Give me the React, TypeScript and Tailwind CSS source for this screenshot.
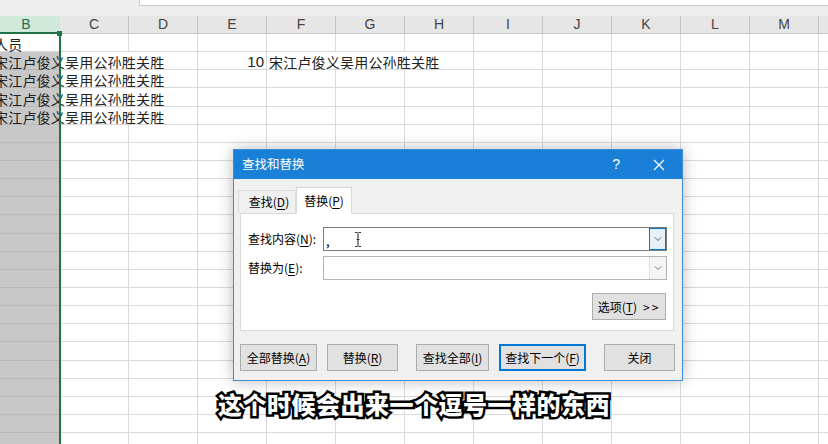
import { ChevronDown } from 'lucide-react';

const COLS = ['B', 'C', 'D', 'E', 'F', 'G', 'H', 'I', 'J', 'K', 'L', 'M', ''];
const WIDTHS = [68, 69, 69, 69, 69, 69, 69, 69, 69, 69, 69, 69, 80];
const NAMES = '宋江卢俊义吴用公孙胜关胜';

type Cell = { text: string; right?: boolean };
type Row = { cells: Record<string, Cell>; open?: string[] };

const ROWS: Row[] = [
  { cells: { B: { text: '人员' } } },
  {
    cells: { B: { text: NAMES }, E: { text: '10', right: true }, F: { text: NAMES } },
    open: ['B', 'C', 'F', 'G'],
  },
  { cells: { B: { text: NAMES } }, open: ['B', 'C'] },
  { cells: { B: { text: NAMES } }, open: ['B', 'C'] },
  { cells: { B: { text: NAMES } }, open: ['B', 'C'] },
  ...Array.from({ length: 18 }, () => ({ cells: {} })),
];

const CJK = 'font-["Noto_Sans_CJK_SC","Noto_Sans",sans-serif]';

function Sheet() {
  return (
    <div className="flex flex-col">
      {/* formula bar strip */}
      <div className="flex h-[16px] bg-[#eeeeee]">
        <div className="w-[139px]" />
        <div className="h-[6px] flex-1 border-b border-l border-[#c8c8c8] bg-white" />
      </div>

      {/* column headers */}
      <div className="ml-[-8px] flex h-[18px] bg-[#e6e6e6] font-['Liberation_Sans',sans-serif] text-[14px]">
        {COLS.map((c, i) => (
          <div
            key={i}
            style={{ width: WIDTHS[i] }}
            className={
              c === 'B'
                ? 'flex shrink-0 items-center justify-center border-b-2 border-[#217346] bg-[#cfeadb] text-[#2a6b49]'
                : 'flex shrink-0 items-center justify-center border-r border-b border-[#c6c6c6] text-[#444]'
            }
          >
            {c}
          </div>
        ))}
      </div>

      {/* cells */}
      {ROWS.map((row, r) => (
        <div key={r} className={`ml-[-8px] flex h-[18.15px] bg-white text-[14px] text-[#222] ${CJK}`}>
          {COLS.map((c, i) => {
            const cell = c ? row.cells[c] : undefined;
            const open = row.open?.includes(c);
            const grey = c === 'B' && r > 0;
            return (
              <div
                key={i}
                style={{ width: WIDTHS[i] }}
                className={`flex shrink-0 items-center whitespace-nowrap border-b ${
                  open ? 'border-r-0' : 'border-r'
                } ${grey ? 'border-[#b9b9b9] bg-[#c8c8c8]' : 'border-[#dadada]'} ${
                  cell?.right ? 'justify-end pr-[2px]' : 'pl-[2px]'
                }`}
              >
                {cell && (
                  <span
                    className={
                      cell.right
                        ? "mt-[3px] font-['Liberation_Sans',sans-serif] text-[15px]"
                        : 'mt-[3px] leading-[18px] tracking-[0.2px]'
                    }
                  >
                    {cell.text}
                  </span>
                )}
              </div>
            );
          })}
        </div>
      ))}
    </div>
  );
}

function Btn({ label, w, primary }: { label: React.ReactNode; w: string; primary?: boolean }) {
  return (
    <div
      className={`flex h-[27px] ${w} items-center justify-center bg-[#e1e1e1] text-[12px] text-black ${
        primary ? 'border-2 border-[#0078d7]' : 'border border-[#adadad]'
      }`}
    >
      {label}
    </div>
  );
}

function u(s: string) {
  return <span className="underline underline-offset-2">{s}</span>;
}

function Dialog() {
  return (
    <div
      className={`absolute left-[233px] top-[149px] flex h-[232px] w-[450px] flex-col border border-[#3d8ddb] bg-[#f0f0f0] shadow-[0_0_14px_rgba(0,0,0,0.28)] ${CJK}`}
    >
      {/* title bar */}
      <div className="flex h-[29px] shrink-0 items-center bg-[#1a7fd6] pl-[8px] text-[12.5px] text-white">
        <span>查找和替换</span>
        <span className="ml-auto mr-[33px] font-['Liberation_Sans',sans-serif] text-[14px]">?</span>
        <svg width="12" height="12" viewBox="0 0 12 12" className="mr-[17px]">
          <path d="M1 1L11 11M11 1L1 11" stroke="white" strokeWidth="1.2" />
        </svg>
      </div>

      {/* tabs */}
      <div className="ml-[4px] mt-[8px] flex h-[26px] items-end text-[12px] text-black">
        <div className="flex h-[23px] w-[58px] items-center justify-center border border-b-0 border-[#dcdcdc] bg-[#f0f0f0] pl-[4px]">
          查找({u('D')})
        </div>
        <div className="relative z-10 mb-[-1px] flex h-[27px] w-[56px] items-center justify-center border border-b-0 border-[#d9d9d9] bg-white">
          替换({u('P')})
        </div>
      </div>

      {/* panel */}
      <div className="ml-[6px] flex h-[118px] w-[434px] flex-col border border-[#d9d9d9] bg-white pt-[13px] text-[12px] text-black">
        <div className="flex h-[24px] items-center">
          <span className="ml-[7px] w-[75px]">查找内容({u('N')}):</span>
          <div className="relative flex h-[24px] w-[344px] items-center border border-[#7a7a7a]">
            <span className="ml-[2px] mt-[4px] text-[13px]">,</span>
            <svg width="8" height="15" viewBox="0 0 8 15" className="absolute left-[30px] top-[4px]">
              <path d="M1 0.5H3.5M4.5 0.5H7M4 1V14M1 14.5H3.5M4.5 14.5H7M2.5 7.5H5.5" stroke="#333" strokeWidth="1.1" fill="none" />
            </svg>
            <div className="ml-auto flex h-[22px] w-[17px] items-center justify-center border border-[#0078d7] bg-[#e5f1fb]">
              <ChevronDown size={12} strokeWidth={1.5} color="#333" />
            </div>
          </div>
        </div>
        <div className="mt-[5px] flex h-[24px] items-center">
          <span className="ml-[7px] w-[75px]">替换为({u('E')}):</span>
          <div className="flex h-[24px] w-[344px] items-center border border-[#b4b4b4]">
            <div className="ml-auto flex h-[22px] w-[17px] items-center justify-center border-l border-[#dcdcdc] bg-[#f5f5f5]">
              <ChevronDown size={12} strokeWidth={1.5} color="#555" />
            </div>
          </div>
        </div>
        <div className="mr-[7px] mt-[13px] flex justify-end">
          <Btn w="w-[74px]" label={<>选项({u('T')}) <span className="ml-[6px] tracking-[2px]">&gt;&gt;</span></>} />
        </div>
      </div>

      {/* buttons */}
      <div className="ml-[6px] mt-[13px] flex">
        <Btn w="w-[77px]" label={<>全部替换({u('A')})</>} />
        <div className="ml-[10px]">
          <Btn w="w-[71px]" label={<>替换({u('R')})</>} />
        </div>
        <div className="ml-[18px]">
          <Btn w="w-[73px]" label={<>查找全部({u('I')})</>} />
        </div>
        <div className="ml-[10px]">
          <Btn w="w-[87px]" primary label={<>查找下一个({u('F')})</>} />
        </div>
        <div className="ml-[18px]">
          <Btn w="w-[71px]" label="关闭" />
        </div>
      </div>
    </div>
  );
}

export default function App() {
  return (
    <div className="relative h-[444px] w-[828px] overflow-hidden bg-white">
      <Sheet />

      {/* column selection outline */}
      <div className="absolute bottom-0 left-[59px] top-[34px] w-[2px] bg-[#217346]" />
      <div className="absolute left-[57px] top-[31px] h-[5px] w-[5px] bg-[#217346]" />

      <Dialog />

      {/* subtitle */}
      <div className="absolute left-0 right-0 top-[388px] flex justify-center">
        <span
          className={`text-[24px] font-black leading-[32px] tracking-[0.5px] text-white [-webkit-text-stroke:5px_#000] [paint-order:stroke_fill] ${CJK}`}
        >
          这个时候会出来一个逗号一样的东西
        </span>
      </div>
    </div>
  );
}
